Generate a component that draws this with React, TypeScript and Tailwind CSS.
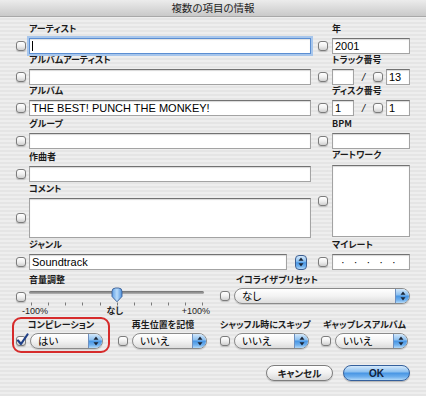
import type { ReactNode } from "react";

const jp = "font-['Noto_Sans_CJK_JP',sans-serif] [font-feature-settings:'palt']";
const latin = "font-['Liberation_Sans',sans-serif]";
const aqua =
  "bg-[image:linear-gradient(180deg,#d3e8fb_0%,#8fc2f1_40%,#4a97e4_52%,#6fb0ee_78%,#b2d9f8_100%)]";

function Label({ children, className = "" }: { children: ReactNode; className?: string }) {
  return (
    <div className={`h-[12px] text-[9px] leading-[12px] font-bold text-[#1b1b1b] whitespace-nowrap ${jp} ${className}`}>
      {children}
    </div>
  );
}

function Check({ checked = false }: { checked?: boolean }) {
  return (
    <div className="relative h-[10px] w-[10px] shrink-0 rounded-[3px] border border-[#7c7c7c] bg-linear-to-b from-white via-[#f0f0f0] to-[#cfcfcf] shadow-[0_1px_1px_rgba(0,0,0,0.18)]">
      {checked && (
        <svg className="absolute -left-[1px] -top-[4px]" width="13" height="13" viewBox="0 0 13 13">
          <path d="M2 7.5 L5 11 L11.5 1.5" fill="none" stroke="#1f3f86" strokeWidth="2.2" strokeLinecap="round" strokeLinejoin="round" />
        </svg>
      )}
    </div>
  );
}

function Field({ className = "", children }: { className?: string; children?: ReactNode }) {
  return (
    <div
      className={`h-[16px] border border-[#a3a3a3] border-t-[#727272] bg-white pl-[2px] text-[11px] leading-[14px] text-black shadow-[inset_0_1px_1px_rgba(0,0,0,0.16)] ${latin} ${className}`}
    >
      {children}
    </div>
  );
}

function Arrows() {
  return (
    <svg width="6" height="10" viewBox="0 0 6 10">
      <path d="M3 0.5 L5.5 3.8 H0.5 Z" fill="#1a2536" />
      <path d="M3 9.5 L5.5 6.2 H0.5 Z" fill="#1a2536" />
    </svg>
  );
}

function Popup({ value, className = "" }: { value: string; className?: string }) {
  return (
    <div
      className={`flex h-[16px] items-center overflow-hidden rounded-full border border-[#8a8a8a] bg-linear-to-b from-white via-[#f3f3f3] to-[#dcdcdc] shadow-[0_1px_1px_rgba(0,0,0,0.15)] ${className}`}
    >
      <span className={`flex-1 pl-[7px] text-[10.5px] leading-[14px] text-black ${jp}`}>{value}</span>
      <div className={`flex h-full w-[14px] items-center justify-center border-l border-[#6d8fbf] ${aqua}`}>
        <Arrows />
      </div>
    </div>
  );
}

function Block({ label, children, className = "", rowClass = "mt-[3px]" }: { label: string; children: ReactNode; className?: string; rowClass?: string }) {
  return (
    <div className={className}>
      <Label className="pl-[13px]">{label}</Label>
      <div className={`flex items-center ${rowClass}`}>{children}</div>
    </div>
  );
}

function RBlock({ label, children, className = "", rowClass = "mt-[3px]", latinLabel = false }: { label: string; children: ReactNode; className?: string; rowClass?: string; latinLabel?: boolean }) {
  return (
    <div className={className}>
      <Label className={`pl-[14px] ${latinLabel ? latin : ""}`}>{label}</Label>
      <div className={`flex items-center ${rowClass}`}>{children}</div>
    </div>
  );
}

function Slash() {
  return <span className={`w-[19px] text-center text-[11px] italic leading-[14px] text-[#222] ${latin}`}>/</span>;
}

function Group({ label, value, popupW, width, red = false }: { label: string; value: string; popupW: string; width: string; red?: boolean }) {
  return (
    <div className={`mr-[4px] rounded-[9px] border-2 px-[2px] pb-[2px] ${red ? "border-[#d62b2b]" : "border-transparent"} ${width}`}>
      <Label className="text-center">{label}</Label>
      <div className="mt-[2px] flex items-center">
        <Check checked={red} />
        <Popup value={value} className={`ml-[4px] ${popupW}`} />
      </div>
    </div>
  );
}

const ticks = [15, 32, 49, 66, 84, 101, 118, 135, 152, 169, 186];

export default function App() {
  return (
    <div className="h-[396px] w-[426px] overflow-hidden bg-[image:repeating-linear-gradient(180deg,#eeeeee_0px,#eeeeee_2px,#e5e5e5_2px,#e5e5e5_4px)]">
      <div className={`h-[17px] border-b border-[#a8a8a8] bg-linear-to-b from-[#ececec] to-[#c9c9c9] text-center text-[10.5px] leading-[16px] text-[#1e1e1e] ${jp}`}>
        複数の項目の情報
      </div>

      <div className="flex px-[16px] pt-[6px]">
        <div className="w-[295px]">
          <Block label="アーティスト">
            <Check />
            <div className="relative ml-[3px] h-[16px] flex-1 border border-[#5b8ed2] bg-white shadow-[0_0_0_2px_#a7c6ec,inset_0_1px_1px_rgba(0,0,0,0.12)]">
              <div className="absolute left-[2px] top-[2px] h-[10px] w-[1px] bg-black" />
            </div>
          </Block>
          <Block label="アルバムアーティスト">
            <Check />
            <Field className="ml-[3px] flex-1" />
          </Block>
          <Block label="アルバム">
            <Check />
            <Field className="ml-[3px] flex-1">THE BEST! PUNCH THE MONKEY!</Field>
          </Block>
          <Block label="グループ" className="mt-[2px]">
            <Check />
            <Field className="ml-[3px] flex-1" />
          </Block>
          <Block label="作曲者" className="mt-[2px]">
            <Check />
            <Field className="ml-[3px] flex-1" />
          </Block>
          <Block label="コメント" className="mt-[1px]">
            <Check />
            <Field className="ml-[3px] h-[40px] flex-1" />
          </Block>
          <Block label="ジャンル" className="mt-[1px]">
            <Check />
            <Field className="ml-[3px] w-[258px]">Soundtrack</Field>
            <div className={`ml-[8px] flex h-[15px] w-[12px] items-center justify-center rounded-[4px] border border-[#3d5f92] ${aqua}`}>
              <Arrows />
            </div>
          </Block>
        </div>

        <div className="ml-[7px] w-[92px]">
          <RBlock label="年">
            <Check />
            <Field className="ml-[4px] w-[78px]">2001</Field>
          </RBlock>
          <RBlock label="トラック番号">
            <Check />
            <Field className="ml-[4px] w-[22px]" />
            <Slash />
            <Check />
            <Field className="ml-[3px] w-[24px]">13</Field>
          </RBlock>
          <RBlock label="ディスク番号">
            <Check />
            <Field className="ml-[4px] w-[22px]">1</Field>
            <Slash />
            <Check />
            <Field className="ml-[3px] w-[24px]">1</Field>
          </RBlock>
          <RBlock label="BPM" latinLabel className="mt-[2px]">
            <Check />
            <Field className="ml-[4px] w-[78px]" />
          </RBlock>
          <RBlock label="アートワーク" rowClass="mt-[4px]">
            <Check />
            <Field className="ml-[4px] h-[72px] w-[78px]" />
          </RBlock>
          <RBlock label="マイレート" className="mt-[2px]">
            <Check />
            <Field className="ml-[4px] w-[78px] pl-[8px] text-[10px] tracking-[3px] text-[#bdbdbd]">· · · · ·</Field>
          </RBlock>
        </div>
      </div>

      <div className="mt-[4px] flex items-start px-[16px]">
        <div className="w-[196px]">
          <Label className="pl-[13px]">音量調整</Label>
          <div className="mt-[1px] flex items-start">
            <div className="mt-[5px]">
              <Check />
            </div>
            <div className="relative ml-[3px] h-[15px] w-[175px]">
              <div className="absolute left-0 right-0 top-[4px] h-[3px] rounded-full bg-linear-to-b from-[#6f6f6f] to-[#b5b5b5]" />
              <svg className="absolute left-[82px] top-0" width="12" height="16" viewBox="0 0 12 16">
                <defs>
                  <linearGradient id="thumb" x1="0" y1="0" x2="1" y2="0">
                    <stop offset="0" stopColor="#5e9fe6" />
                    <stop offset="0.5" stopColor="#b8dbfa" />
                    <stop offset="1" stopColor="#4a8fdc" />
                  </linearGradient>
                </defs>
                <path d="M1 4.5 Q1 1 4.5 1 H7.5 Q11 1 11 4.5 V9.5 L6 14.8 L1 9.5 Z" fill="url(#thumb)" stroke="#3a5f95" strokeWidth="0.9" />
              </svg>
            </div>
          </div>
          <svg className="block" width="196" height="4" viewBox="0 0 196 4">
            {ticks.map((x) => (
              <rect key={x} x={x} y="0.5" width="1" height="3" fill="#7a7a7a" />
            ))}
          </svg>
          <div className={`flex h-[10px] justify-between pl-[6px] pr-[2px] text-[9px] leading-[10px] text-[#222] ${latin}`}>
            <span>-100%</span>
            <span className={`font-bold ${jp}`}>なし</span>
            <span>+100%</span>
          </div>
        </div>

        <div className="ml-[8px] flex-1">
          <Label className="pl-[16px]">イコライザプリセット</Label>
          <div className="mt-[2px] flex items-center">
            <Check />
            <Popup value="なし" className="ml-[4px] flex-1" />
          </div>
        </div>
      </div>

      <div className="mt-[1px] flex pl-[12px]">
        <Group label="コンピレーション" value="はい" popupW="w-[73px]" width="w-[98px]" red />
        <Group label="再生位置を記憶" value="いいえ" popupW="w-[75px]" width="w-[98px]" />
        <Group label="シャッフル時にスキップ" value="いいえ" popupW="w-[76px]" width="w-[97px]" />
        <Group label="ギャップレスアルバム" value="いいえ" popupW="w-[75px]" width="w-[95px]" />
      </div>

      <div className="mt-[12px] flex justify-end gap-[10px] pr-[16px]">
        <div className={`flex h-[16px] w-[67px] items-center justify-center rounded-full border border-[#7d7d7d] bg-linear-to-b from-white via-[#f2f2f2] to-[#d9d9d9] text-[9.5px] font-bold text-[#1b1b1b] shadow-[0_1px_1px_rgba(0,0,0,0.2)] ${jp}`}>
          キャンセル
        </div>
        <div className={`flex h-[16px] w-[67px] items-center justify-center rounded-full border border-[#35609c] text-[10px] font-bold text-[#10203a] shadow-[0_1px_1px_rgba(0,0,0,0.25)] ${aqua} ${latin}`}>
          OK
        </div>
      </div>
    </div>
  );
}
